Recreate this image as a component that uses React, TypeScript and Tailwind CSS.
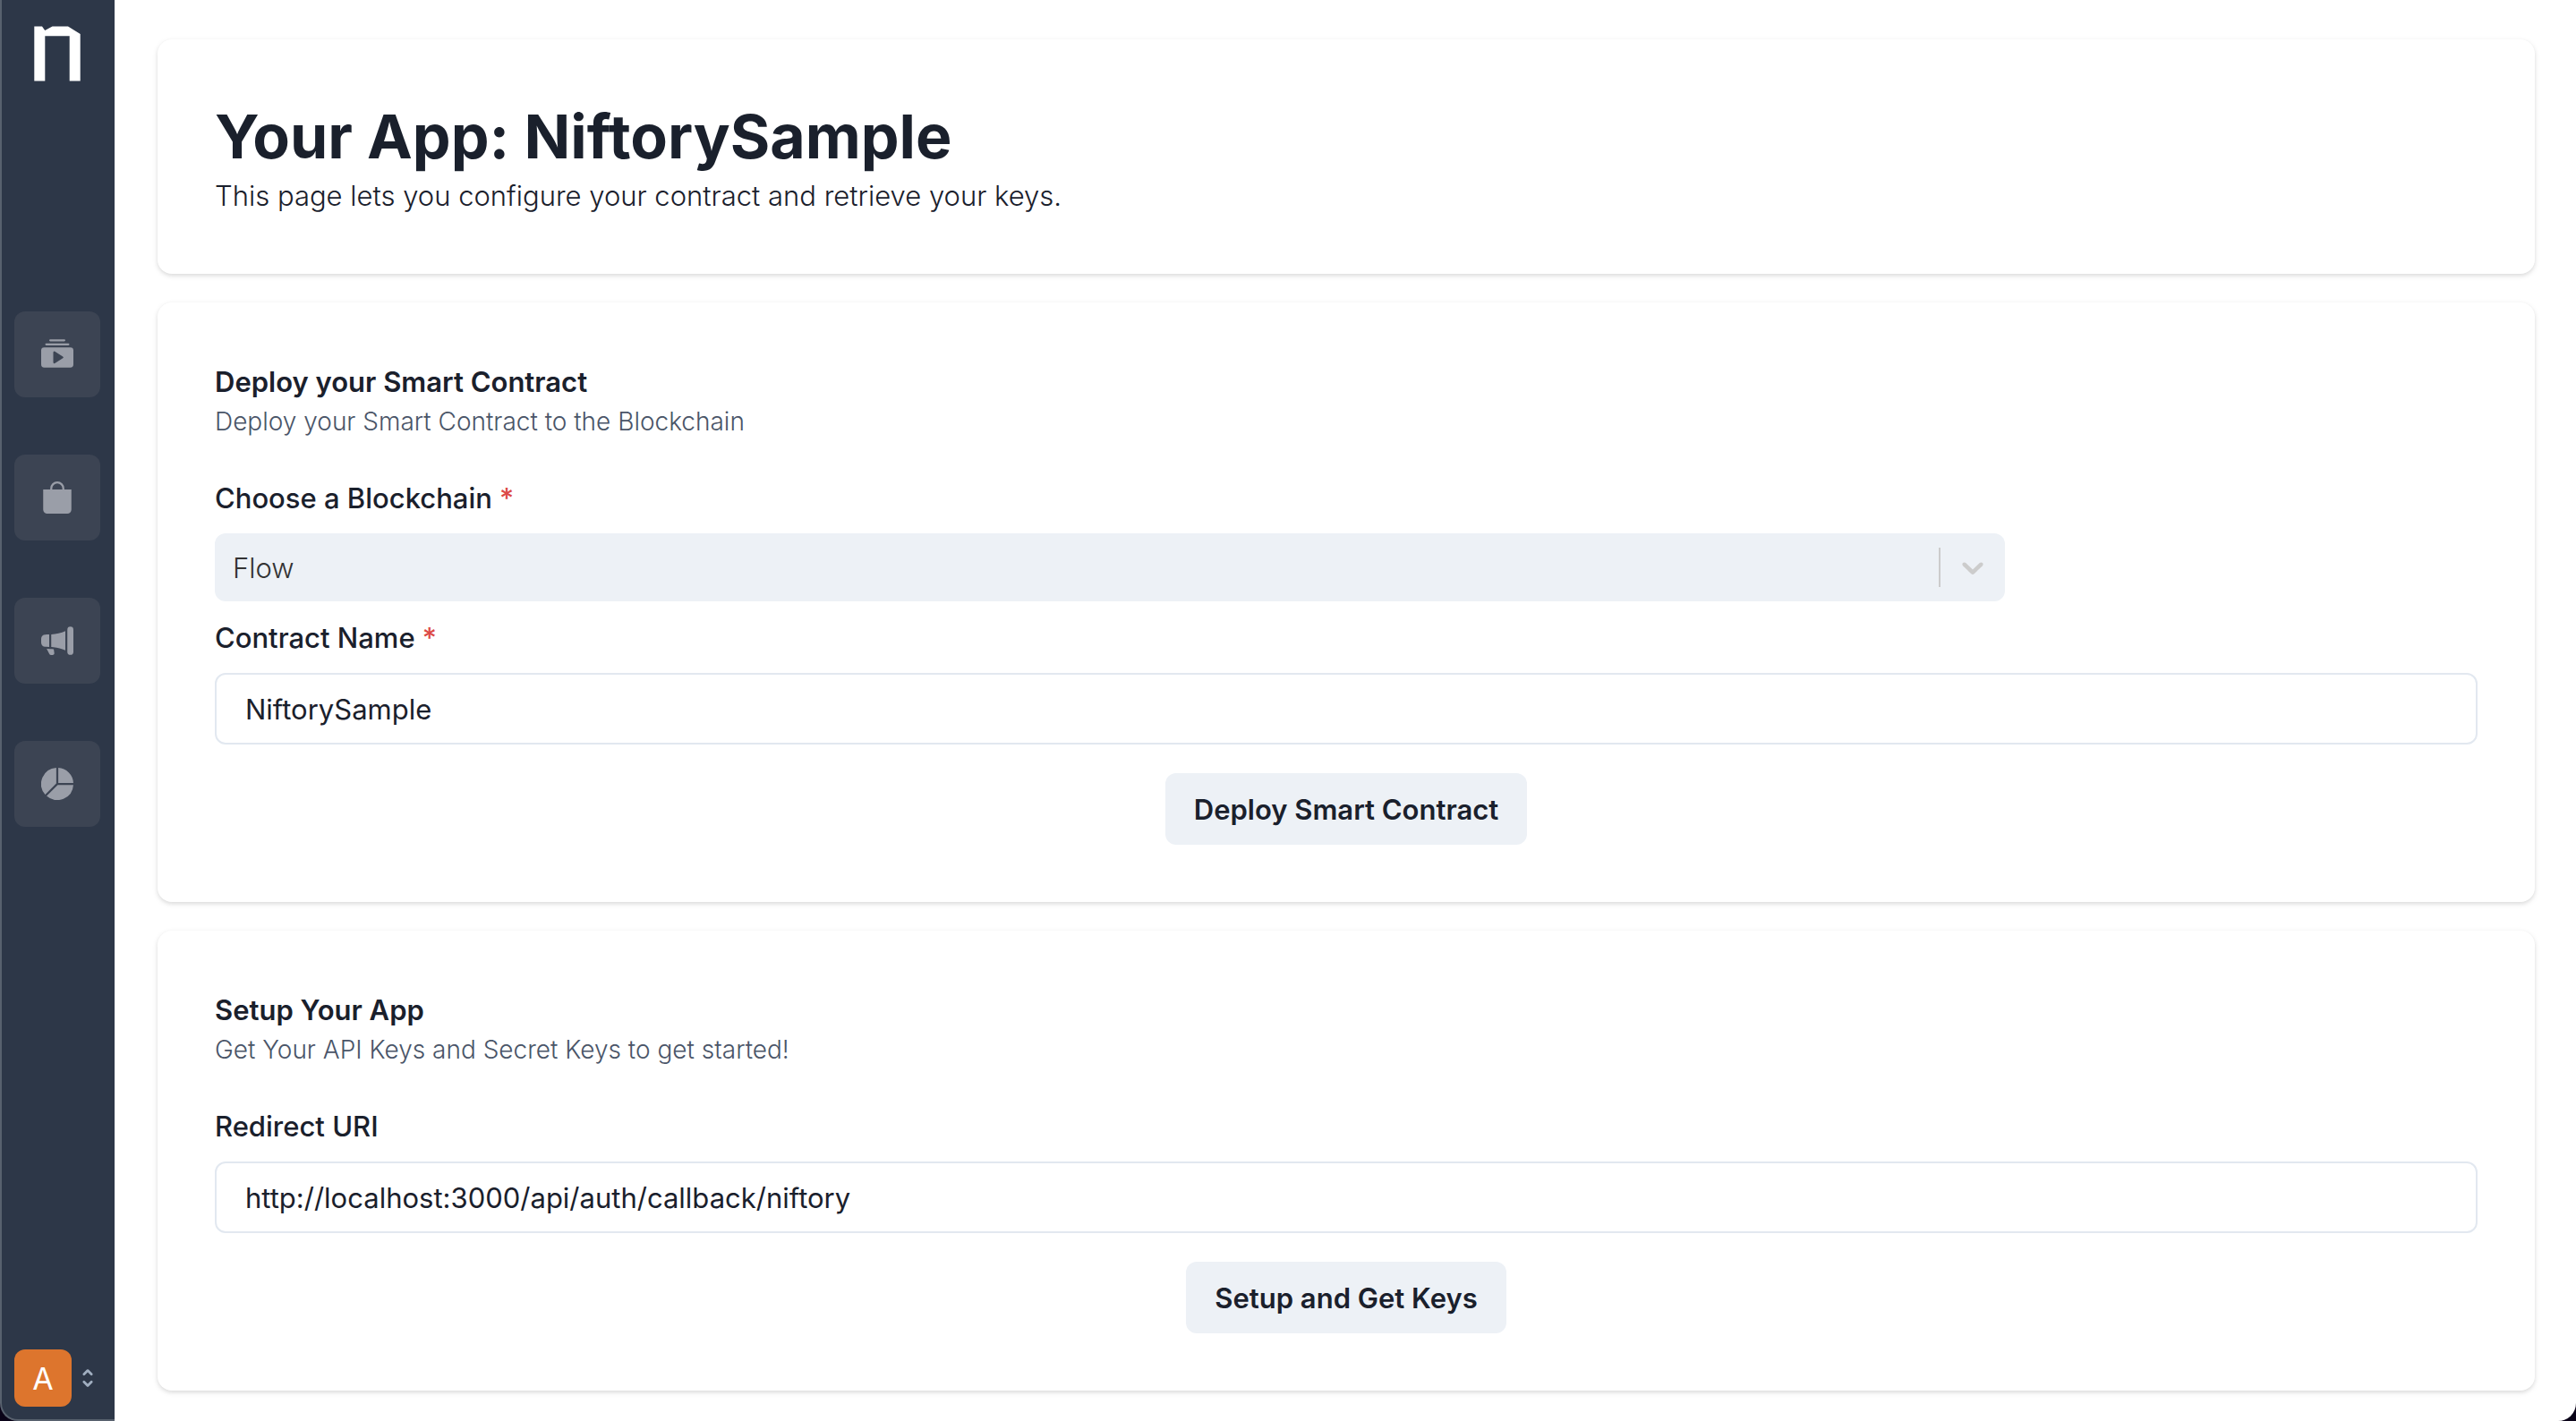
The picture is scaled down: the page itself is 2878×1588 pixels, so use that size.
import type { ReactNode } from "react";
import type { IconType } from "react-icons";
import { BsBagFill, BsCollectionPlayFill, BsMegaphoneFill, BsPieChartFill } from "react-icons/bs";
import { HiSelector } from "react-icons/hi";

const navItems: { label: string; icon: IconType }[] = [
  { label: "Collections", icon: BsCollectionPlayFill },
  { label: "Store", icon: BsBagFill },
  { label: "Campaigns", icon: BsMegaphoneFill },
  { label: "Reports", icon: BsPieChartFill },
];

function Logo() {
  return (
    <svg viewBox="0 0 52 62" className="h-[62px] w-[52px] fill-white" role="img" aria-label="Niftory">
      <path d="M0.3 0.5H9L12.2 5L20.5 0.5H38L51.7 9V61.5H39.7V11.3H12.3V61.5H0.3Z" />
    </svg>
  );
}

function Sidebar() {
  return (
    <aside className="flex w-32 shrink-0 flex-col justify-between rounded-bl-[20px] border-b-2 border-l-2 border-[#58616e] bg-[#2d3748] pt-[29px] pb-3.5 pl-3.5">
      <div>
        <a href="#home" className="ml-[22px] block w-[52px]">
          <Logo />
        </a>
        <nav className="mt-[257px] flex flex-col gap-16">
          {navItems.map(({ label, icon: Icon }) => (
            <button
              key={label}
              type="button"
              aria-label={label}
              className="flex size-24 items-center justify-center rounded-xl bg-[#3c4453] text-[#9a9ea8]"
            >
              <Icon className="size-9" />
            </button>
          ))}
        </nav>
      </div>
      <button type="button" aria-label="Account menu" className="flex items-center gap-1">
        <span className="flex size-16 items-center justify-center rounded-xl bg-[#dd752d] pt-0.5 text-[34px] leading-[48px] text-white">
          A
        </span>
        <HiSelector className="size-7 text-[#a0aec0]" />
      </button>
    </aside>
  );
}

function Card({ children }: { children: ReactNode }) {
  return (
    <section className="rounded-2xl bg-white p-16 shadow-[0_2px_6px_0_rgba(0,0,0,0.1),0_2px_4px_0_rgba(0,0,0,0.06)]">
      {children}
    </section>
  );
}

function CardHeader({ title, text }: { title: string; text: string }) {
  return (
    <header className="mb-[42px]">
      <h2 className="text-[31px] leading-[50px] font-semibold">{title}</h2>
      <p className="text-[28px] leading-[38px] font-light text-[#4a5568]">{text}</p>
    </header>
  );
}

function Label({ htmlFor, required, children }: { htmlFor: string; required?: boolean; children: ReactNode }) {
  return (
    <label htmlFor={htmlFor} className="mb-3.5 block text-[31px] leading-[50px] font-medium">
      {children}
      {required && <span className="ml-2 text-[#dc4a46]">*</span>}
    </label>
  );
}

function TextField({ id, value }: { id: string; value: string }) {
  return (
    <input
      id={id}
      type="text"
      defaultValue={value}
      className="block h-20 w-full rounded-xl border-2 border-[#e2e8f0] bg-white px-8 text-[31px] leading-[48px]"
    />
  );
}

function Action({ children }: { children: ReactNode }) {
  return (
    <div className="mt-8 flex justify-center">
      <button type="button" className="h-20 rounded-xl bg-[#edf1f6] px-8 pt-0.5 text-[31px] leading-[48px] font-semibold">
        {children}
      </button>
    </div>
  );
}

function BlockchainSelect() {
  return (
    <div className="relative mb-4 h-[76px] w-full max-w-[2000px]">
      <select
        id="blockchain"
        disabled
        className="size-full appearance-none rounded-xl bg-[#edf1f6] px-5 pt-0.5 text-[31px] leading-[48px] font-light text-[#333333] opacity-100"
      >
        <option>Flow</option>
      </select>
      <div className="pointer-events-none absolute inset-y-0 right-0 flex items-center">
        <span className="h-11 w-0.5 bg-[#cccccc]" />
        <svg viewBox="0 0 20 20" className="mx-4 size-10 fill-[#cccccc]" aria-hidden="true">
          <path d="M4.516 7.548c0.436-0.446 1.043-0.481 1.576 0l3.908 3.747 3.908-3.747c0.533-0.481 1.141-0.446 1.574 0 0.436 0.445 0.408 1.197 0 1.615-0.406 0.418-4.695 4.502-4.695 4.502-0.217 0.223-0.502 0.335-0.787 0.335s-0.57-0.112-0.789-0.335c0 0-4.287-4.084-4.695-4.502s-0.436-1.17 0-1.615z" />
        </svg>
      </div>
    </div>
  );
}

export default function App() {
  return (
    <div className="flex min-h-screen bg-[#0a0318] font-['Inter',sans-serif] text-[#1a202c]">
      <Sidebar />
      <main className="flex min-w-0 flex-1 flex-col gap-8 rounded-br-[20px] bg-white pt-11 pr-[46px] pb-8 pl-12">
        <Card>
          <h1 className="text-[68px] leading-[88px] font-bold">Your App: NiftorySample</h1>
          <p className="text-[31px] leading-[46px] font-light">
            This page lets you configure your contract and retrieve your keys.
          </p>
        </Card>
        <Card>
          <CardHeader title="Deploy your Smart Contract" text="Deploy your Smart Contract to the Blockchain" />
          <Label htmlFor="blockchain" required>
            Choose a Blockchain
          </Label>
          <BlockchainSelect />
          <Label htmlFor="contract-name" required>
            Contract Name
          </Label>
          <TextField id="contract-name" value="NiftorySample" />
          <Action>Deploy Smart Contract</Action>
        </Card>
        <Card>
          <CardHeader title="Setup Your App" text="Get Your API Keys and Secret Keys to get started!" />
          <Label htmlFor="redirect-uri">Redirect URI</Label>
          <TextField id="redirect-uri" value="http://localhost:3000/api/auth/callback/niftory" />
          <Action>Setup and Get Keys</Action>
        </Card>
      </main>
    </div>
  );
}
